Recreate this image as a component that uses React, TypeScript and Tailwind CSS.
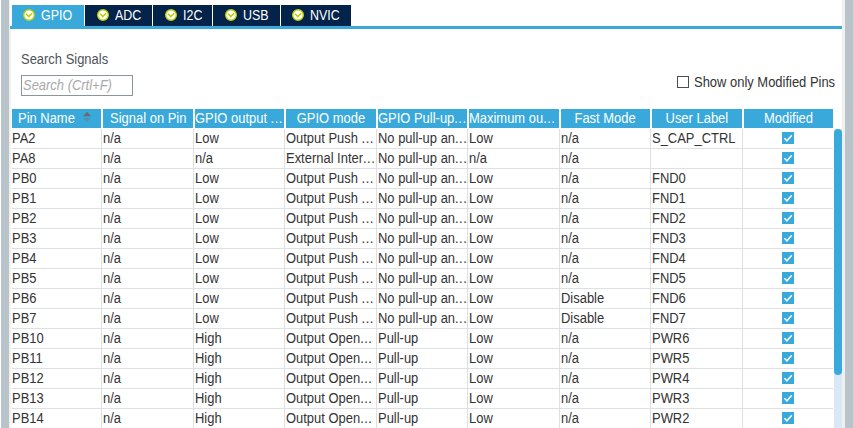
const columns = [
  { title: 'Pin Name', sorted: true },
  { title: 'Signal on Pin' },
  { title: 'GPIO output ...', tight: true },
  { title: 'GPIO mode' },
  { title: 'GPIO Pull-up...', tight: true },
  { title: 'Maximum ou...', tight: true },
  { title: 'Fast Mode' },
  { title: 'User Label' },
  { title: 'Modified' },
];

const PUSH = 'Output Push ...';
const OPEN = 'Output Open...';
const NOPULL = 'No pull-up an...';

const rows = [
  ['PA2', 'n/a', 'Low', PUSH, NOPULL, 'Low', 'n/a', 'S_CAP_CTRL'],
  ['PA8', 'n/a', 'n/a', 'External Inter...', NOPULL, 'n/a', 'n/a', ''],
  ['PB0', 'n/a', 'Low', PUSH, NOPULL, 'Low', 'n/a', 'FND0'],
  ['PB1', 'n/a', 'Low', PUSH, NOPULL, 'Low', 'n/a', 'FND1'],
  ['PB2', 'n/a', 'Low', PUSH, NOPULL, 'Low', 'n/a', 'FND2'],
  ['PB3', 'n/a', 'Low', PUSH, NOPULL, 'Low', 'n/a', 'FND3'],
  ['PB4', 'n/a', 'Low', PUSH, NOPULL, 'Low', 'n/a', 'FND4'],
  ['PB5', 'n/a', 'Low', PUSH, NOPULL, 'Low', 'n/a', 'FND5'],
  ['PB6', 'n/a', 'Low', PUSH, NOPULL, 'Low', 'Disable', 'FND6'],
  ['PB7', 'n/a', 'Low', PUSH, NOPULL, 'Low', 'Disable', 'FND7'],
  ['PB10', 'n/a', 'High', OPEN, 'Pull-up', 'Low', 'n/a', 'PWR6'],
  ['PB11', 'n/a', 'High', OPEN, 'Pull-up', 'Low', 'n/a', 'PWR5'],
  ['PB12', 'n/a', 'High', OPEN, 'Pull-up', 'Low', 'n/a', 'PWR4'],
  ['PB13', 'n/a', 'High', OPEN, 'Pull-up', 'Low', 'n/a', 'PWR3'],
  ['PB14', 'n/a', 'High', OPEN, 'Pull-up', 'Low', 'n/a', 'PWR2'],
];

const tabs = [
  { name: 'GPIO', box: 'w-[72px] bg-[#39a9dc] pl-[11px]' },
  { name: 'ADC', box: 'w-[67px] bg-[#03234b] pl-3' },
  { name: 'I2C', box: 'w-[59px] bg-[#03234b] pl-3' },
  { name: 'USB', box: 'w-[67px] bg-[#03234b] pl-3' },
  { name: 'NVIC', box: 'w-[70px] bg-[#03234b] pl-[11px]' },
];

const grid = 'grid grid-cols-[90px_92px_91px_92px_91px_92px_91px_92px_90px]';

// Slightly condensed interface lettering; a trailing ellipsis is set a little wider
function Label({ text, className = 'origin-left scale-x-[0.925]' }: { text: string; className?: string }) {
  const cut = text.endsWith('...');
  return (
    <span className={`inline-block whitespace-nowrap ${className}`}>
      {cut ? text.slice(0, -3) : text}
      {cut && <span className="tracking-[0.5px]">...</span>}
    </span>
  );
}

function StatusIcon() {
  return (
    <svg width="12" height="12" viewBox="0 0 12 12" className="mt-1 shrink-0">
      <circle cx="6" cy="6" r="5.3" fill="#fff" stroke="#bccf00" strokeWidth="1.4" />
      <path d="M3 4.8 5.8 7.6 9.1 4.3" fill="none" stroke="#bccf00" strokeWidth="1.5" />
    </svg>
  );
}

function Checked() {
  return (
    <svg width="12" height="12" viewBox="0 0 12 12" className="mt-[3px]">
      <rect width="12" height="12" fill="#39a9dc" />
      <path d="M2.4 6.3 4.9 8.8 9.8 3.2" fill="none" stroke="#fff" strokeWidth="1.5" />
    </svg>
  );
}

export default function App() {
  return (
    <div className="flex h-[428px] w-[853px] overflow-hidden bg-white font-['Liberation_Sans',Arial,sans-serif] text-[14px] leading-[19px] text-[#333]">
      <div className="ml-px w-2 shrink-0 bg-[#b8c3ca]" />
      <div className="w-[2px] shrink-0 bg-[#f0f0f0]" />
      <main className="-ml-px flex w-[832px] shrink-0 flex-col">
        <nav className="flex h-[29px] shrink-0 gap-px border-b-[3px] border-[#39a9dc] bg-white pt-[5px] pl-[2px]">
          {tabs.map((t) => (
            <div key={t.name} className={`flex h-[21px] gap-[6px] text-white ${t.box}`}>
              <StatusIcon />
              <Label text={t.name} className="mt-px origin-left scale-x-[0.89]" />
            </div>
          ))}
        </nav>
        <section className="flex h-20 shrink-0 justify-between pl-[11px]">
          <div className="pt-[21px]">
            <div className="text-[#4d5358]">
              <Label text="Search Signals" />
            </div>
            <div className="mt-[6px] h-[21px] w-[112px] border border-[#8b959d] pl-px text-[#a9a9a9] italic">
              <Label text="Search (Crtl+F)" />
            </div>
          </div>
          <div className="mt-[44px] mr-[6px] flex h-[19px] gap-[5px]">
            <div className="mt-[3px] size-3 shrink-0 border border-[#4d4d4d]" />
            <div className="w-[142px]">
              <Label text="Show only Modified Pins" />
            </div>
          </div>
        </section>
        <section className="flex h-[319px] overflow-hidden pl-[2px]">
          <div className="w-[821px] shrink-0">
            <div className={`${grid} h-5 text-white`}>
              {columns.map((c, i) => (
                <div
                  key={c.title}
                  className={`flex h-[19px] overflow-hidden bg-[#39a9dc] ${i ? 'ml-px' : ''} ${i < 8 ? 'mr-px' : ''} ${c.tight ? '' : c.sorted ? 'pl-[6px]' : 'justify-center'}`}
                >
                  <Label
                    text={c.title}
                    className={c.tight || c.sorted ? 'origin-left scale-x-[0.925]' : 'origin-center scale-x-[0.925]'}
                  />
                  {c.sorted && (
                    <svg width="8" height="12" viewBox="0 0 8 12" className="mt-[2px] ml-1 shrink-0">
                      <path d="M0 5.3 4 .8 8 5.3Z" fill="#666b70" />
                      <path d="M0 6.8 4 11.2 8 6.8Z" fill="#4f93b4" />
                    </svg>
                  )}
                </div>
              ))}
            </div>
            {rows.map((r) => (
              <div key={r[0]} className={`${grid} h-5`}>
                {r.map((v, i) => (
                  <div key={i} className={`overflow-hidden whitespace-nowrap border-r border-b border-[#dde1e5] ${i ? 'pl-px' : ''}`}>
                    <Label text={v} />
                  </div>
                ))}
                <div className="flex justify-center border-b border-[#dde1e5]">
                  <Checked />
                </div>
              </div>
            ))}
          </div>
          <div className="mt-5 ml-px h-[299px] w-2 shrink-0 bg-[#d9e8f5]">
            <div className="h-[246px] rounded-full bg-[#39a9dc]" />
          </div>
        </section>
      </main>
      <div className="w-[3px] shrink-0 bg-[#f0f0f0]" />
      <div className="w-2 shrink-0 bg-[#b8c3ca]" />
    </div>
  );
}
